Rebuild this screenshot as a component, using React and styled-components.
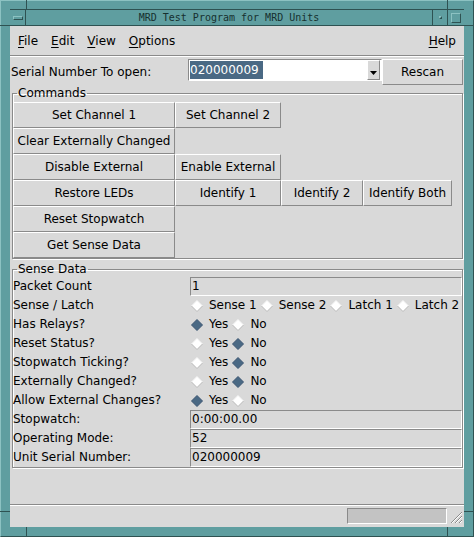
import { Fragment } from 'react';
import styled, { createGlobalStyle } from 'styled-components';

const TEAL = '#5f9ea0';
const TEAL_DARK = '#2e5252';
const TEAL_LIGHT = '#8cc2c2';
const BG = '#d9d9d9';
const SHADE = '#8a8a8a';
const SELECT = '#4a6984';

const GlobalStyle = createGlobalStyle`
  html, body {
    margin: 0;
    padding: 0;
    background: ${TEAL};
  }
  body {
    width: 474px;
    height: 537px;
    overflow: hidden;
    font-family: "DejaVu Sans", "Liberation Sans", sans-serif;
    font-size: 12px;
    color: #000;
  }
`;

const Frame = styled.div`
  position: relative;
  box-sizing: border-box;
  width: 474px;
  height: 537px;
  padding: 8px 9px 9px 9px;
  background: ${TEAL};
  border-top: 1px solid ${TEAL_LIGHT};
  border-left: 1px solid ${TEAL_LIGHT};
  border-right: 1px solid ${TEAL_DARK};
  border-bottom: 1px solid ${TEAL_DARK};
  display: flex;
  flex-direction: column;
`;

// corner handle marks on the window frame
const Notch = styled.span`
  position: absolute;
  left: ${p => p.$x}px;
  top: ${p => p.$y}px;
  width: ${p => p.$w}px;
  height: ${p => p.$h}px;
  background: ${TEAL_DARK};
`;

const TitleBar = styled.div`
  display: flex;
  box-sizing: border-box;
  height: 17px;
  border-top: 1px solid ${TEAL_DARK};
  border-bottom: 1px solid ${TEAL_DARK};
  background: ${TEAL};
`;

const TitleButton = styled.div`
  box-sizing: border-box;
  width: ${p => p.$w}px;
  display: flex;
  align-items: center;
  justify-content: center;
  border-left: ${p => (p.$side === 'right' ? `1px solid ${TEAL_DARK}` : 'none')};
  border-right: ${p => (p.$side === 'left' ? `1px solid ${TEAL_DARK}` : 'none')};
`;

const TitleGlyph = styled.span`
  box-sizing: border-box;
  width: ${p => p.$w}px;
  height: ${p => p.$h}px;
  border-top: 1px solid ${TEAL_LIGHT};
  border-left: 1px solid ${TEAL_LIGHT};
  border-right: 1px solid ${TEAL_DARK};
  border-bottom: 1px solid ${TEAL_DARK};
`;

const TitleText = styled.div`
  flex: 1;
  text-align: center;
  font-family: "DejaVu Sans Mono", "Liberation Mono", monospace;
  font-size: 10px;
  line-height: 15px;
  color: #16302f;
`;

const Client = styled.div`
  flex: 1;
  display: flex;
  flex-direction: column;
  background: ${BG};
`;

const MenuBar = styled.div`
  display: flex;
  align-items: center;
  height: 29px;
  padding: 0 2px 0 1px;
  border-bottom: 1px solid ${SHADE};
  box-shadow: 0 1px 0 #fff;
  margin-bottom: 1px;
`;

const MenuItem = styled.span`
  padding: 0 6px 0 7px;
  margin-left: ${p => (p.$right ? 'auto' : '0')};
`;

const Mnemonic = styled.span`
  text-decoration: underline;
  text-underline-offset: 2px;
`;

const SerialRow = styled.div`
  display: flex;
  align-items: flex-start;
  box-sizing: border-box;
  height: 29px;
  padding: 2px 1px 0 1px;
`;

const SerialLabel = styled.div`
  width: 177px;
  line-height: 26px;
`;

const Combo = styled.div`
  box-sizing: border-box;
  width: 194px;
  height: 22px;
  display: flex;
  align-items: center;
  padding: 0 1px;
  background: #fff;
  border-top: 1px solid ${SHADE};
  border-left: 1px solid ${SHADE};
  border-bottom: 1px solid #fff;
  border-right: 1px solid #fff;
`;

const Selected = styled.span`
  background: ${SELECT};
  color: #fff;
  line-height: 18px;
  padding-right: 4px;
`;

const ArrowButton = styled.div`
  box-sizing: border-box;
  margin-left: auto;
  width: 13px;
  height: 20px;
  display: flex;
  align-items: center;
  justify-content: center;
  padding-top: 6px;
  background: ${BG};
  border-top: 1px solid #fff;
  border-left: 1px solid #fff;
  border-bottom: 1px solid ${SHADE};
  border-right: 1px solid ${SHADE};
`;

const Button = styled.div`
  box-sizing: border-box;
  display: flex;
  align-items: center;
  justify-content: center;
  white-space: nowrap;
  background: ${BG};
  border-top: 1px solid #fff;
  border-left: 1px solid #fff;
  border-bottom: 1px solid ${SHADE};
  border-right: 1px solid ${SHADE};
  grid-column: ${p => p.$col || 'auto'};
  grid-row: ${p => p.$row || 'auto'};
`;

const RescanButton = styled(Button)`
  flex: 1;
  height: 26px;
`;

const Group = styled.fieldset`
  margin: ${p => p.$top || 0}px 1px 0 2px;
  padding: 0;
  min-width: 0;
  border: 1px solid ${SHADE};
  box-shadow: inset 1px 1px 0 #fff, 1px 1px 0 #fff;
`;

const Legend = styled.legend`
  margin-left: 4px;
  padding: 0 1px;
  line-height: 15px;
`;

const CommandGrid = styled.div`
  display: grid;
  grid-template-columns: 162px 106px 82px 89px;
  grid-auto-rows: 26px;
  padding-top: 1px;
`;

const SenseGrid = styled.div`
  display: grid;
  grid-template-columns: 177px 1fr;
  grid-auto-rows: 19px;
`;

const FieldLabel = styled.div`
  line-height: 19px;
  white-space: nowrap;
`;

const Entry = styled.div`
  box-sizing: border-box;
  height: 19px;
  padding: 0 1px;
  line-height: 17px;
  border-top: 1px solid ${SHADE};
  border-left: 1px solid ${SHADE};
  border-bottom: 1px solid #fff;
  border-right: 1px solid #fff;
`;

const RadioGroup = styled.div`
  display: flex;
  align-items: center;
  gap: 4px;
  padding-left: 1px;
`;

const Radio = styled.span`
  display: inline-flex;
  align-items: center;
  gap: 6px;
  line-height: 19px;
  white-space: nowrap;
`;

const Filler = styled.div`
  flex: 1;
`;

const StatusBar = styled.div`
  box-sizing: border-box;
  height: 23px;
  display: flex;
  align-items: flex-start;
  justify-content: flex-end;
  padding: 3px 1px 0 0;
  border-top: 1px solid ${SHADE};
  box-shadow: inset 0 1px 0 #fff;
`;

const StatusBox = styled.div`
  box-sizing: border-box;
  width: 100px;
  height: 16px;
  background: #c3c3c3;
  border-top: 1px solid ${SHADE};
  border-left: 1px solid ${SHADE};
  border-bottom: 1px solid #fff;
  border-right: 1px solid #fff;
`;

const Grip = styled.svg`
  margin: 2px 0 0 2px;
  display: block;
`;

const Diamond = ({ on }) => (
  <svg width="12" height="12" viewBox="0 0 12 12" style={{ display: 'block' }}>
    <polygon points="6,0.5 11.5,6 6,11.5 0.5,6" fill={on ? SELECT : '#fff'} />
    <polyline points="0.5,6 6,0.5 11.5,6" fill="none" stroke={on ? '#3a5570' : '#f4f4f4'} strokeWidth="1" />
    <polyline points="0.5,6 6,11.5 11.5,6" fill="none" stroke={on ? '#3a5570' : '#b8b8b8'} strokeWidth="1" />
  </svg>
);

const commands = [
  { text: 'Set Channel 1', col: 1, row: 1 },
  { text: 'Set Channel 2', col: 2, row: 1 },
  { text: 'Clear Externally Changed', col: 1, row: 2 },
  { text: 'Disable External', col: 1, row: 3 },
  { text: 'Enable External', col: 2, row: 3 },
  { text: 'Restore LEDs', col: 1, row: 4 },
  { text: 'Identify 1', col: 2, row: 4 },
  { text: 'Identify 2', col: 3, row: 4 },
  { text: 'Identify Both', col: 4, row: 4 },
  { text: 'Reset Stopwatch', col: 1, row: 5 },
  { text: 'Get Sense Data', col: 1, row: 6 },
];

const senseRows = [
  { label: 'Packet Count', value: '1' },
  { label: 'Sense / Latch', options: ['Sense 1', 'Sense 2', 'Latch 1', 'Latch 2'], picked: -1 },
  { label: 'Has Relays?', options: ['Yes', 'No'], picked: 0 },
  { label: 'Reset Status?', options: ['Yes', 'No'], picked: 1 },
  { label: 'Stopwatch Ticking?', options: ['Yes', 'No'], picked: 1 },
  { label: 'Externally Changed?', options: ['Yes', 'No'], picked: 1 },
  { label: 'Allow External Changes?', options: ['Yes', 'No'], picked: 0 },
  { label: 'Stopwatch:', value: '0:00:00.00' },
  { label: 'Operating Mode:', value: '52' },
  { label: 'Unit Serial Number:', value: '020000009' },
];

export default function App() {
  return (
    <>
      <GlobalStyle />
      <Frame>
        <Notch $x={25} $y={-1} $w={1} $h={9} />
        <Notch $x={-1} $y={24} $w={10} $h={1} />
        <Notch $x={446} $y={-1} $w={1} $h={9} />
        <Notch $x={463} $y={24} $w={10} $h={1} />
        <Notch $x={-1} $y={510} $w={10} $h={1} />
        <Notch $x={25} $y={526} $w={1} $h={10} />
        <Notch $x={463} $y={510} $w={10} $h={1} />
        <Notch $x={446} $y={526} $w={1} $h={10} />

        <TitleBar>
          <TitleButton $w={16} $side="left">
            <TitleGlyph $w={10} $h={4} />
          </TitleButton>
          <TitleText>MRD Test Program for MRD Units</TitleText>
          <TitleButton $w={15} $side="right">
            <TitleGlyph $w={3} $h={3} />
          </TitleButton>
          <TitleButton $w={17} $side="right">
            <TitleGlyph $w={10} $h={10} />
          </TitleButton>
        </TitleBar>

        <Client>
          <MenuBar>
            <MenuItem><Mnemonic>F</Mnemonic>ile</MenuItem>
            <MenuItem><Mnemonic>E</Mnemonic>dit</MenuItem>
            <MenuItem><Mnemonic>V</Mnemonic>iew</MenuItem>
            <MenuItem><Mnemonic>O</Mnemonic>ptions</MenuItem>
            <MenuItem $right><Mnemonic>H</Mnemonic>elp</MenuItem>
          </MenuBar>

          <SerialRow>
            <SerialLabel>Serial Number To open:</SerialLabel>
            <Combo>
              <Selected>020000009</Selected>
              <ArrowButton>
                <svg width="7" height="5" viewBox="0 0 7 5">
                  <polygon points="0,0 7,0 3.5,4" fill="#000" />
                </svg>
              </ArrowButton>
            </Combo>
            <RescanButton>Rescan</RescanButton>
          </SerialRow>

          <Group>
            <Legend>Commands</Legend>
            <CommandGrid>
              {commands.map(c => (
                <Button key={c.text} $col={c.col} $row={c.row}>{c.text}</Button>
              ))}
            </CommandGrid>
          </Group>

          <Group $top={3}>
            <Legend>Sense Data</Legend>
            <SenseGrid>
              {senseRows.map(r => (
                <Fragment key={r.label}>
                  <FieldLabel>{r.label}</FieldLabel>
                  {r.options ? (
                    <RadioGroup>
                      {r.options.map((o, i) => (
                        <Radio key={o}>
                          <Diamond on={i === r.picked} />
                          {o}
                        </Radio>
                      ))}
                    </RadioGroup>
                  ) : (
                    <Entry>{r.value}</Entry>
                  )}
                </Fragment>
              ))}
            </SenseGrid>
          </Group>

          <Filler />

          <StatusBar>
            <StatusBox />
            <Grip width="14" height="14" viewBox="0 0 14 14">
              <path d="M13 2 L2 13 M13 6 L6 13 M13 10 L10 13" stroke={SHADE} strokeWidth="1" />
              <path d="M13 3 L3 13 M13 7 L7 13 M13 11 L11 13" stroke="#fff" strokeWidth="1" />
            </Grip>
          </StatusBar>
        </Client>
      </Frame>
    </>
  );
}
